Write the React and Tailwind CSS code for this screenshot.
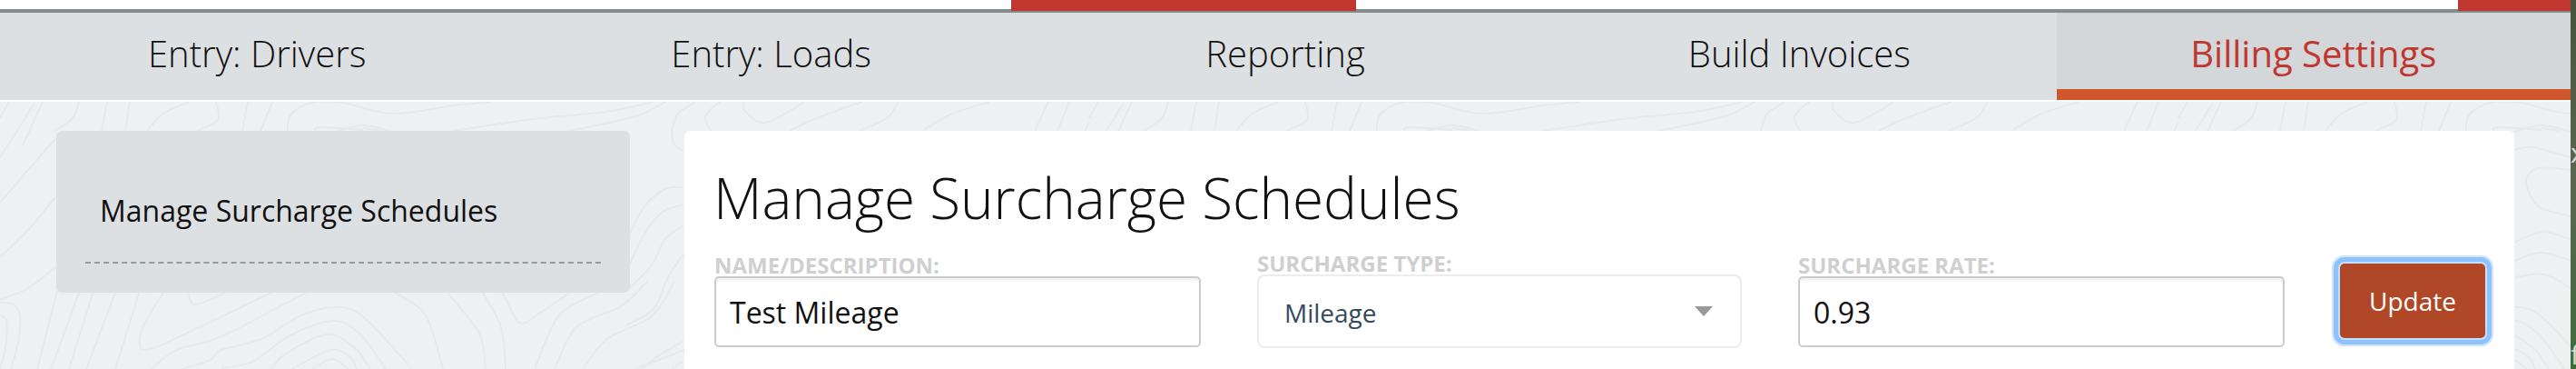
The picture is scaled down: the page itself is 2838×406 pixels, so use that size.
const TABS = ['Entry: Drivers', 'Entry: Loads', 'Reporting', 'Build Invoices', 'Billing Settings']

// contour lines of the page background, repeats every 1200px
const CONTOURS = [
  [[0, 333], [15, 335], [22, 347], [20, 377], [12, 406]],
  [[0, 347], [7, 353], [6, 383], [0, 406]],
  [[63, 320], [41, 406]],
  [[88, 320], [56, 406]],
  [[103, 320], [76, 406]],
  [[128, 320], [95, 406]],
  [[154, 320], [127, 406]],
  [[181, 320], [159, 357], [154, 380], [166, 384], [205, 367], [303, 320]],
  [[208, 323], [215, 335], [249, 322]],
  [[337, 322], [244, 370], [195, 385], [166, 406]],
  [[200, 406], [230, 397], [244, 385], [288, 373], [332, 347], [376, 338], [405, 353], [454, 406]],
  [[244, 405], [278, 398], [318, 370], [366, 353], [396, 367], [425, 406]],
  [[298, 406], [318, 387], [361, 368], [391, 383], [408, 406]],
  [[322, 406], [364, 385], [386, 393], [393, 406]],
  [[344, 406], [366, 395], [383, 406]],
  [[435, 322], [469, 347], [488, 406]],
  [[493, 322], [528, 367], [535, 406]],
  [[532, 322], [552, 360], [557, 406]],
  [[554, 322], [569, 352], [579, 355], [591, 347], [628, 322]],
  [[660, 322], [616, 347], [589, 406]],
  [[713, 310], [684, 337], [635, 360], [611, 406]],
  [[743, 310], [718, 348], [669, 373], [642, 406]],
  [[760, 383], [699, 406]],
  [[10, 112], [0, 130]],
  [[47, 112], [25, 160]],
  [[87, 112], [80, 130], [60, 144]],
  [[118, 112], [112, 144]],
  [[143, 112], [138, 144]],
  [[208, 112], [180, 125], [162, 144]],
  [[238, 112], [240, 132], [217, 144]],
  [[273, 112], [267, 144]],
  [[300, 112], [287, 144]],
  [[317, 144], [320, 127], [343, 113], [377, 113], [432, 125], [500, 116], [540, 112]],
  [[400, 143], [353, 140], [347, 144]],
  [[370, 145], [400, 138], [432, 145]],
  [[370, 165], [390, 162], [432, 173]],
  [[432, 187], [397, 185], [383, 200], [397, 227], [432, 238]],
  [[370, 267], [400, 255], [432, 263]],
  [[370, 287], [400, 278], [432, 287]],
  [[370, 305], [403, 302], [432, 317]],
  [[500, 144], [587, 131], [667, 123], [720, 112]],
  [[400, 141], [420, 144]],
  [[627, 144], [700, 128], [733, 112]],
  [[740, 144], [747, 125], [767, 112]],
  [[793, 112], [777, 128], [783, 144]],
  [[820, 112], [820, 121], [843, 135], [887, 112]],
  [[870, 144], [900, 130], [950, 112]],
  [[947, 144], [977, 130], [990, 112]],
  [[1017, 144], [1047, 126], [1090, 112]],
  [[1140, 144], [1155, 112]],
  [[1165, 144], [1178, 112]],
  [[1195, 144], [1200, 135]],
  [[740, 140], [742, 157], [753, 167]],
  [[753, 206], [733, 208], [710, 227], [694, 257]],
  [[753, 225], [730, 233], [710, 257], [694, 290]],
  [[753, 248], [733, 263], [717, 293], [690, 320]],
  [[753, 280], [737, 303], [720, 340], [690, 358]],
  [[753, 375], [723, 393], [707, 406]],
  [[753, 397], [740, 406]],
  [[61, 153], [31, 187], [0, 223]],
  [[38, 113], [15, 150], [0, 173]],
  [[61, 217], [31, 253], [0, 283]],
  [[62, 293], [31, 317], [0, 330]],
]

const smooth = (pts) => {
  let d = `M${pts[0][0]} ${pts[0][1]}`
  for (let i = 0; i < pts.length - 1; i++) {
    const p0 = pts[i - 1] || pts[i]
    const p1 = pts[i]
    const p2 = pts[i + 1]
    const p3 = pts[i + 2] || p2
    const c1 = [p1[0] + (p2[0] - p0[0]) / 6, p1[1] + (p2[1] - p0[1]) / 6]
    const c2 = [p2[0] - (p3[0] - p1[0]) / 6, p2[1] - (p3[1] - p1[1]) / 6]
    d += ` C${c1[0]} ${c1[1]} ${c2[0]} ${c2[1]} ${p2[0]} ${p2[1]}`
  }
  return d
}

function Topo() {
  return (
    <svg className="absolute left-0 top-[-112px] w-[2832px] h-[406px]" viewBox="0 0 2832 406" fill="none">
      {[0, 1200, 2400].map((dx) => (
        <g key={dx} transform={`translate(${dx} 0)`} stroke="#e6e8ea" strokeWidth="2">
          {CONTOURS.map((pts, i) => (
            <path key={i} d={smooth(pts)} />
          ))}
        </g>
      ))}
    </svg>
  )
}

const labelClass = 'block text-[24px] leading-[20px] mb-[2px] font-bold uppercase text-[#cfcfcf]'
const inputClass =
  'block w-full h-[78px] rounded-[5px] border-2 border-[#cccccc] bg-white pl-[15px] text-[32px] text-[#111] outline-none shadow-[inset_0_3px_3px_rgba(0,0,0,0.06)]'

export default function App() {
  return (
    <div className="flex w-[2838px] h-[406px] overflow-hidden bg-white font-['Open_Sans',sans-serif]">
      <div className="w-[2832px] shrink-0 flex flex-col">
        <div className="flex h-[10px]">
          <div className="ml-[1114px] w-[380px] h-[12px] bg-[#c0372f] relative z-10" />
          <div className="ml-[1214px] w-[124px] h-[12px] bg-[#c0372f] relative z-10" />
        </div>
        <div className="h-[4px] bg-[#7f8f8c]" />
        <nav className="grid grid-cols-5 h-[98px] border-b-2 border-white bg-[#dde0e3]">
          {TABS.map((tab, i) => (
            <div
              key={tab}
              className={
                i === 4
                  ? 'text-center pt-[18px] text-[40px] leading-[54px] font-normal text-[#c0372f] bg-[#d3d7da] border-b-[12px] border-[#cf572b]'
                  : 'text-center pt-[18px] text-[40px] leading-[54px] font-light text-[#111]'
              }
            >
              {tab}
            </div>
          ))}
        </nav>
        <main className="relative flex-1 overflow-hidden bg-[#eff0f2] flex items-start gap-[60px] pl-[62px] pt-[32px]">
          <Topo />
          <aside className="relative w-[632px] h-[178px] shrink-0 rounded-[6px] bg-[#dde0e3] pt-[65px]">
            <div className="pl-[48px] text-[32px] leading-[46px] text-[#111]">Manage Surcharge Schedules</div>
            <div className="mx-[32px] mt-[33px] border-b-2 border-dashed border-[#8f9d9b]" />
          </aside>
          <section className="relative w-[2016px] h-[300px] shrink-0 rounded-[6px] bg-white pl-[33px] pt-[32px]">
            <h1 className="-ml-px text-[62px] leading-[82px] font-light text-[#111]">Manage Surcharge Schedules</h1>
            <div className="flex items-start mt-[22px]">
              <div className="w-[536px] shrink-0 mt-[2px]">
                <label className={labelClass}>Name/Description:</label>
                <input className={inputClass} defaultValue="Test Mileage" />
              </div>
              <div className="w-[534px] shrink-0 ml-[62px]">
                <label className={labelClass}>Surcharge Type:</label>
                <div className="flex items-center justify-between h-[81px] rounded-[8px] border-2 border-[#ececec] bg-white pl-[28px] pr-[30px]">
                  <span className="text-[28px] pt-[2px] text-[#34495e]">Mileage</span>
                  <span className="w-0 h-0 border-x-[10px] border-x-transparent border-t-[11px] border-t-[#999999]" />
                </div>
              </div>
              <div className="w-[536px] shrink-0 ml-[62px] mt-[2px]">
                <label className={labelClass}>Surcharge Rate:</label>
                <input className={inputClass} defaultValue="0.93" />
              </div>
              <button className="w-[160px] h-[82px] ml-[61px] mt-[10px] shrink-0 rounded-[5px] bg-[#b04827] text-[28px] text-white shadow-[0_0_0_2px_#c8e0ff,0_0_0_7px_#8ec3ff,0_0_0_9px_#cfe5ff]">
                Update
              </button>
            </div>
          </section>
        </main>
      </div>
      <div className="relative flex-1 overflow-hidden bg-gradient-to-b from-[#46543f] via-[#5a6650] to-[#3f6b3a]">
        <span className="absolute left-0 top-[150px] text-[30px] leading-[36px] text-[#d8d8d8]">x</span>
        <span className="absolute left-0 top-[372px] text-[30px] leading-[36px] text-[#d8d8d8]">f</span>
      </div>
    </div>
  )
}
